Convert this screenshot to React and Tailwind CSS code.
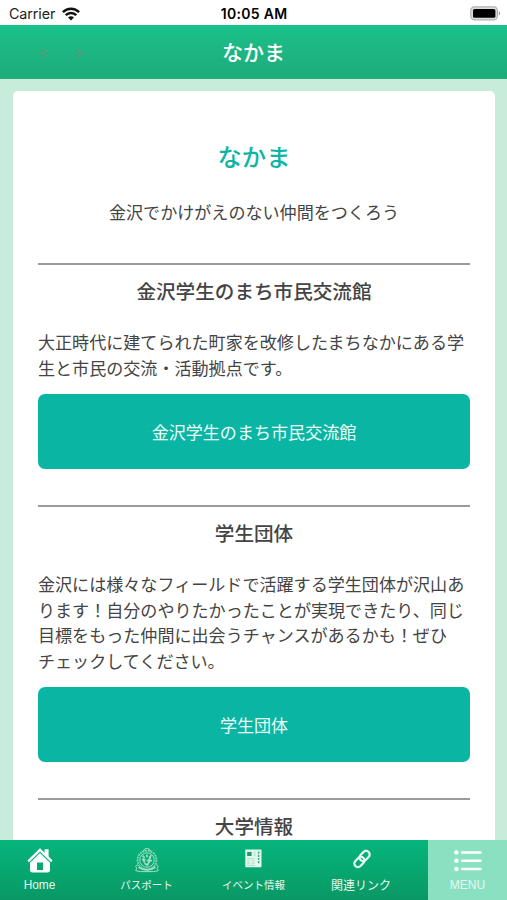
import { Fragment } from 'react'

const sections = [
    {
        title: '金沢学生のまち市民交流館',
        lines: ['大正時代に建てられた町家を改修したまちなかにある学', '生と市民の交流・活動拠点です。'],
        button: '金沢学生のまち市民交流館',
    },
    {
        title: '学生団体',
        lines: [
            '金沢には様々なフィールドで活躍する学生団体が沢山あ',
            'ります！自分のやりたかったことが実現できたり、同じ',
            '目標をもった仲間に出会うチャンスがあるかも！ぜひ',
            'チェックしてください。',
        ],
        button: '学生団体',
    },
    { title: '大学情報', lines: [], button: null },
]

function WifiIcon() {
    return (
        <svg width="18" height="14" viewBox="0 0 18 14" fill="none" stroke="#111" strokeWidth="2.5">
            <path d="M0.9 5.2C5.4 0.6 12.6 0.6 17.1 5.2" />
            <path d="M3.7 8.2C6.7 5.2 11.3 5.2 14.3 8.2" />
            <path d="M9 13.4L6.1 10.5C7.7 8.9 10.3 8.9 11.9 10.5Z" fill="#111" stroke="none" />
        </svg>
    )
}

function BatteryIcon() {
    return (
        <svg width="31" height="15" viewBox="0 0 31 15">
            <rect x="0.8" y="0.8" width="26.6" height="13" rx="3.6" fill="#dedede" stroke="#b2b2b2" strokeWidth="1.2" />
            <rect x="3" y="3" width="22.4" height="8.8" rx="1.6" fill="#000" />
            <path d="M28.8 5.2C30.6 5.8 30.6 8.8 28.8 9.4Z" fill="#999" />
        </svg>
    )
}

function HomeIcon() {
    return (
        <svg width="26" height="25" viewBox="0 0 26 25" fill="#fff">
            <path d="M13 0.2L17.6 4.7V1.3H21.6V8.6L25.6 12.6L24 14.3L13 3.4L2 14.3L0.4 12.6Z" />
            <path d="M13 4.9L23 14.7V22.2Q23 24.6 20.6 24.6H5.4Q3 24.6 3 22.2V14.7ZM10 14.4V22H16V14.4Z" fillRule="evenodd" />
        </svg>
    )
}

function CrestIcon() {
    return (
        <svg width="26" height="25" viewBox="0 0 26 25" fill="none" stroke="#a0e0c5" strokeWidth="1">
            <circle cx="13" cy="12" r="7.2" />
            <circle cx="13" cy="12" r="9.4" strokeDasharray="2 0.8" strokeWidth="1.9" opacity="0.8" />
            <path d="M9 3.3Q10.2 2.8 10.7 1Q13 0 15.3 1Q15.8 2.8 17 3.3" />
            <path d="M4 16.5L1.6 18.3L2.7 20.3L1.7 22.7L6.5 23.6H19.5L24.3 22.7L23.3 20.3L24.4 18.3L22 16.5" />
            <path d="M4.5 19.2Q13 24.6 21.5 19.2" strokeWidth="1.6" />
            <path d="M8.6 7.6L10.6 9.8M12.9 6.6V9.3M17.2 7.3L15.2 9.8M8 11.6H11.6M9.4 10.2L10.4 14.6M16.8 9.3L14 12.6H18M16.4 11.8L13.4 17L10.4 15.3" strokeWidth="1.7" />
        </svg>
    )
}

function NewsIcon() {
    return (
        <svg width="17" height="19" viewBox="0 0 17 19">
            <rect x="0.3" y="0.5" width="16.2" height="17.8" rx="0.8" fill="#e4f8ef" />
            <path d="M2.2 2.9H6.6V7H2.2Z" fill="#1b9b6b" />
            <path d="M8.4 3.2H10.8M8.4 5H10.8M8.4 6.8H10.8M2 9.7H9.8M2 12H5M6.4 12H9.8M2 14.2H5M6.4 14.2H9.8M2 16.3H9.8" stroke="#9ad8bd" strokeWidth="0.7" />
            <path d="M13.6 2.5V15" stroke="#3fac82" strokeWidth="1.5" strokeDasharray="2.2 1" />
        </svg>
    )
}

function LinkIcon() {
    return (
        <svg width="20" height="20" viewBox="0 0 20 20" fill="none" stroke="#e9fbf3" strokeWidth="2.2">
            <rect x="6.9" y="3.4" width="11.4" height="7.2" rx="3.6" transform="rotate(-45 12.6 7)" />
            <rect x="1.7" y="9.4" width="11.4" height="7.2" rx="3.6" transform="rotate(-45 7.4 13)" />
        </svg>
    )
}

function MenuIcon() {
    return (
        <svg width="28" height="22" viewBox="0 0 28 22" stroke="#fff" strokeWidth="2.5" strokeLinecap="round">
            <path d="M8 2.4H26.5M8 10.7H26.5M8 19H26.5" />
            <g fill="#fff" stroke="none">
                <circle cx="2.4" cy="2.4" r="2.2" />
                <circle cx="2.4" cy="10.7" r="2.2" />
                <circle cx="2.4" cy="19" r="2.2" />
            </g>
        </svg>
    )
}

function Tab({ icon, label, iconClass = 'pt-[3px]', labelClass = '' }) {
    return (
        <div className="flex w-[79px] shrink-0 flex-col items-center whitespace-nowrap text-[#e6f8f0]">
            <div className={`flex h-[38px] items-center ${iconClass}`}>{icon}</div>
            <span className={`leading-[15px] ${labelClass}`}>{label}</span>
        </div>
    )
}

export default function App() {
    return (
        <main className="flex h-[900px] w-[507px] flex-col overflow-hidden bg-[#c8ecda] font-['Liberation_Sans','Noto_Sans_CJK_JP',sans-serif] text-[#444]">
            {/* Status bar */}
            <div className="grid h-[25px] shrink-0 grid-cols-3 items-center bg-white pl-[9px] pr-[6px] font-['Inter','Noto_Sans_CJK_JP',sans-serif] text-[#222]">
                <div className="flex items-center gap-[7px] pt-[2px] text-[14.3px] tracking-[-0.1px]">
                    Carrier
                    <WifiIcon />
                </div>
                <div className="pr-[2px] pt-[2px] text-center text-[14px] font-semibold tracking-[0.3px] text-black">10:05 AM</div>
                <div className="flex justify-end pt-[1px]">
                    <BatteryIcon />
                </div>
            </div>

            {/* Title bar */}
            <header className="grid h-[54px] shrink-0 grid-cols-3 items-center border-b border-[#2aa97b] bg-linear-to-b from-[#1bc18b] to-[#1dab7a]">
                <div className="flex gap-[27px] pl-[39px] pt-[2px] text-[15px] leading-none text-[#6a9276]">
                    <span>&lt;</span>
                    <span>&gt;</span>
                </div>
                <h1 className="text-center font-['Noto_Sans_CJK_JP',sans-serif] text-[21px] font-medium leading-none text-white">なかま</h1>
            </header>

            {/* Content card */}
            <div className="min-h-0 flex-1 overflow-hidden pl-[13px] pr-[12px] pt-[12px]">
                <div className="rounded-t-[5px] bg-white px-[25px] pt-[47px] font-['Noto_Sans_CJK_JP',sans-serif]">
                    <h2 className="text-center text-[24.3px] font-medium leading-[36px] text-[#0fb5a3]">なかま</h2>
                    <p className="mt-[25px] text-center text-[17.07px] leading-[26px]">金沢でかけがえのない仲間をつくろう</p>
                    {sections.map((s, i) => (
                        <section key={s.title} className={i === 0 ? 'mt-[38px]' : 'mt-[36px]'}>
                            <div className="h-[2px] bg-[#9b9b9b]" />
                            <h3 className={`text-center text-[19.6px] font-medium ${s.button ? 'mt-[11px] leading-[30px]' : 'mt-[12px] leading-[28px]'}`}>
                                {s.title}
                            </h3>
                            {s.button && (
                                <>
                                    <p className="mt-[23px] whitespace-nowrap text-[17.07px] leading-[25.5px]">
                                        {s.lines.map(line => (
                                            <Fragment key={line}>
                                                {line}
                                                <br />
                                            </Fragment>
                                        ))}
                                    </p>
                                    <button className="mt-[14px] block h-[75px] w-full rounded-[7px] bg-[#0bb5a4] text-[17.07px] text-[#eafffb]">
                                        {s.button}
                                    </button>
                                </>
                            )}
                        </section>
                    ))}
                </div>
            </div>

            {/* Tab bar */}
            <nav className="flex h-[60px] shrink-0 bg-linear-to-b from-[#05b67c] to-[#099865]">
                <Tab icon={<HomeIcon />} label="Home" iconClass="pt-[2px]" labelClass="text-[11.9px]" />
                <div className="flex flex-1 justify-around px-[14px]">
                    <Tab icon={<CrestIcon />} label="パスポート" labelClass="text-[10.5px]" />
                    <Tab icon={<NewsIcon />} label="イベント情報" iconClass="pb-px" labelClass="text-[10.5px]" />
                    <Tab icon={<LinkIcon />} label="関連リンク" iconClass="pl-[2px]" labelClass="pl-px pt-px text-[12px]" />
                </div>
                <div className="bg-[#8ae1c2]">
                    <Tab icon={<MenuIcon />} label="MENU" labelClass="text-[12px]" />
                </div>
            </nav>
        </main>
    )
}
